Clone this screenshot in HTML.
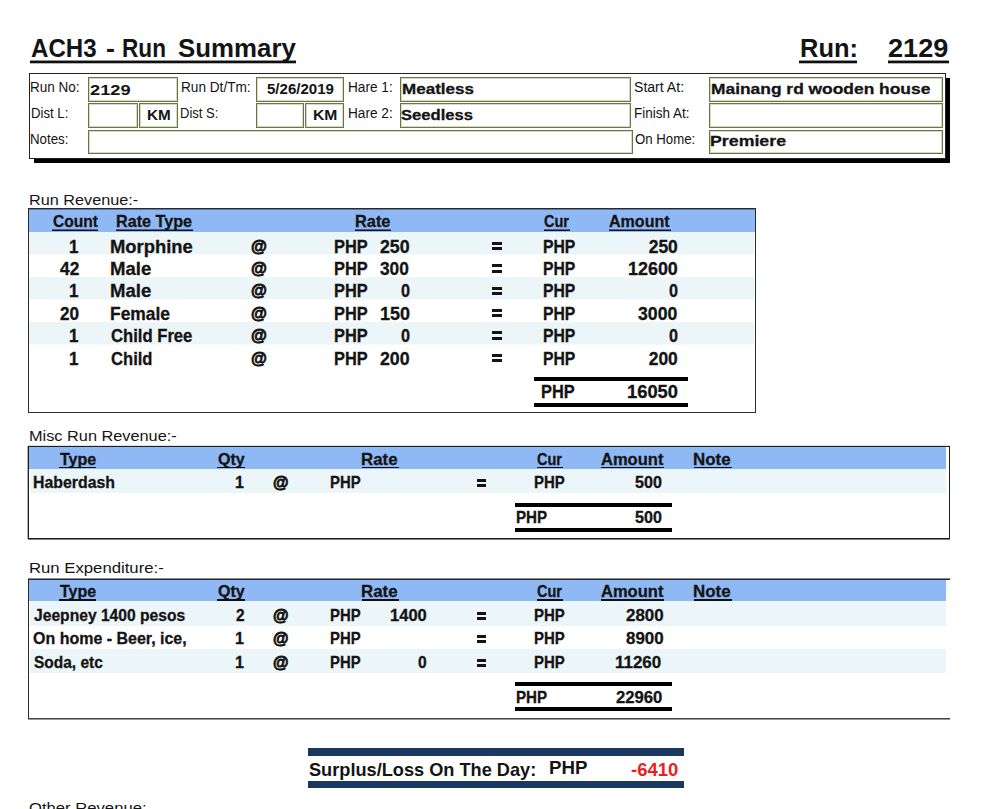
<!DOCTYPE html>
<html><head><meta charset="utf-8"><title>ACH3 - Run Summary</title>
<style>
html,body{margin:0;padding:0;background:#fff;}
body{width:997px;height:809px;position:relative;overflow:hidden;font-family:"Liberation Sans",sans-serif;}
.r{position:absolute;}
.k{-webkit-text-stroke:0.3px #141414;}
.t{position:absolute;white-space:pre;line-height:1;font-weight:700;color:#141414;transform-origin:0 0;font-family:"Liberation Sans",sans-serif;}
</style></head><body>
<span id="t0" class="t" style="left:30.96px;top:36.15px;font-size:25.58px;transform:scaleX(0.9415);">ACH3</span>
<span id="t1" class="t" style="left:105.78px;top:36.15px;font-size:25.58px;transform:scaleX(1.0516);">-</span>
<span id="t2" class="t" style="left:122.48px;top:36.15px;font-size:25.58px;transform:scaleX(0.8839);">Run</span>
<span id="t3" class="t" style="left:177.52px;top:36.15px;font-size:25.58px;transform:scaleX(1.0108);">Summary</span>
<div class="r" style="left:30px;top:60px;width:266px;height:1px;background:rgba(15,15,15,0.45);"></div>
<div class="r" style="left:30px;top:61px;width:266px;height:2px;background:#101010;"></div>
<div class="r" style="left:30px;top:63px;width:266px;height:1px;background:rgba(15,15,15,0.3);"></div>
<span id="t4" class="t" style="left:799.77px;top:36.00px;font-size:25.87px;transform:scaleX(0.9845);">Run:</span>
<div class="r" style="left:799px;top:60px;width:57.5px;height:1px;background:rgba(15,15,15,0.45);"></div>
<div class="r" style="left:799px;top:61px;width:57.5px;height:2px;background:#101010;"></div>
<div class="r" style="left:799px;top:63px;width:57.5px;height:1px;background:rgba(15,15,15,0.3);"></div>
<span id="t5" class="t" style="left:888.48px;top:36.00px;font-size:25.87px;transform:scaleX(1.0495);">2129</span>
<div class="r" style="left:887.5px;top:60px;width:61.5px;height:1px;background:rgba(15,15,15,0.45);"></div>
<div class="r" style="left:887.5px;top:61px;width:61.5px;height:2px;background:#101010;"></div>
<div class="r" style="left:887.5px;top:63px;width:61.5px;height:1px;background:rgba(15,15,15,0.3);"></div>
<div class="r" style="left:34px;top:78px;width:916px;height:85px;background:#000;"></div>
<div class="r" style="left:29px;top:73px;width:917px;height:86px;background:#fff;border:1px solid #222;box-sizing:border-box;"></div>
<div class="r" style="left:88px;top:77px;width:90px;height:25px;background:#fff;border:1px solid #69773f;box-sizing:border-box;box-shadow:inset 0 0 0 1px rgba(105,119,63,0.28);"></div>
<div class="r" style="left:88px;top:103px;width:50px;height:25px;background:#fff;border:1px solid #69773f;box-sizing:border-box;box-shadow:inset 0 0 0 1px rgba(105,119,63,0.28);"></div>
<div class="r" style="left:139px;top:103px;width:39px;height:25px;background:#fff;border:1px solid #69773f;box-sizing:border-box;box-shadow:inset 0 0 0 1px rgba(105,119,63,0.28);"></div>
<div class="r" style="left:256px;top:77px;width:88px;height:25px;background:#fff;border:1px solid #69773f;box-sizing:border-box;box-shadow:inset 0 0 0 1px rgba(105,119,63,0.28);"></div>
<div class="r" style="left:256px;top:103px;width:48px;height:25px;background:#fff;border:1px solid #69773f;box-sizing:border-box;box-shadow:inset 0 0 0 1px rgba(105,119,63,0.28);"></div>
<div class="r" style="left:305px;top:103px;width:39px;height:25px;background:#fff;border:1px solid #69773f;box-sizing:border-box;box-shadow:inset 0 0 0 1px rgba(105,119,63,0.28);"></div>
<div class="r" style="left:400px;top:77px;width:231px;height:25px;background:#fff;border:1px solid #69773f;box-sizing:border-box;box-shadow:inset 0 0 0 1px rgba(105,119,63,0.28);"></div>
<div class="r" style="left:400px;top:103px;width:231px;height:25px;background:#fff;border:1px solid #69773f;box-sizing:border-box;box-shadow:inset 0 0 0 1px rgba(105,119,63,0.28);"></div>
<div class="r" style="left:88px;top:130px;width:545px;height:24px;background:#fff;border:1px solid #69773f;box-sizing:border-box;box-shadow:inset 0 0 0 1px rgba(105,119,63,0.28);"></div>
<div class="r" style="left:709px;top:77px;width:234px;height:25px;background:#fff;border:1px solid #69773f;box-sizing:border-box;box-shadow:inset 0 0 0 1px rgba(105,119,63,0.28);"></div>
<div class="r" style="left:709px;top:103px;width:234px;height:25px;background:#fff;border:1px solid #69773f;box-sizing:border-box;box-shadow:inset 0 0 0 1px rgba(105,119,63,0.28);"></div>
<div class="r" style="left:709px;top:130px;width:234px;height:24px;background:#fff;border:1px solid #69773f;box-sizing:border-box;box-shadow:inset 0 0 0 1px rgba(105,119,63,0.28);"></div>
<span id="t6" class="t" style="left:30.45px;top:79.52px;font-size:14.39px;transform:scaleX(0.9391);font-weight:400;">Run No:</span>
<span id="t7" class="t" style="left:30.51px;top:105.72px;font-size:14.39px;transform:scaleX(0.9156);font-weight:400;">Dist L:</span>
<span id="t8" class="t" style="left:30.45px;top:131.92px;font-size:14.39px;transform:scaleX(0.9248);font-weight:400;">Notes:</span>
<span id="t9" class="t" style="left:180.73px;top:79.52px;font-size:14.39px;transform:scaleX(0.9473);font-weight:400;">Run Dt/Tm:</span>
<span id="t10" class="t" style="left:179.53px;top:105.72px;font-size:14.39px;transform:scaleX(0.9045);font-weight:400;">Dist S:</span>
<span id="t11" class="t" style="left:347.84px;top:79.52px;font-size:14.39px;transform:scaleX(0.9490);font-weight:400;">Hare 1:</span>
<span id="t12" class="t" style="left:347.84px;top:105.72px;font-size:14.39px;transform:scaleX(0.9490);font-weight:400;">Hare 2:</span>
<span id="t13" class="t" style="left:634.38px;top:79.52px;font-size:14.39px;transform:scaleX(0.9790);font-weight:400;">Start At:</span>
<span id="t14" class="t" style="left:634.45px;top:105.72px;font-size:14.39px;transform:scaleX(0.9379);font-weight:400;">Finish At:</span>
<span id="t15" class="t" style="left:634.97px;top:131.92px;font-size:14.39px;transform:scaleX(0.9198);font-weight:400;">On Home:</span>
<span id="t16" class="t" style="left:89.73px;top:81.76px;font-size:15.41px;transform:scaleX(1.1819);">2129</span>
<span id="t17" class="t" style="left:146.88px;top:107.03px;font-size:15.55px;transform:scaleX(0.9814);">KM</span>
<span id="t18" class="t" style="left:312.56px;top:107.03px;font-size:15.55px;transform:scaleX(1.0099);">KM</span>
<span id="t19" class="t" style="left:266.77px;top:81.28px;font-size:15.26px;transform:scaleX(0.9874);">5/26/2019</span>
<span id="t20" class="t k" style="left:402.17px;top:81.30px;font-size:15.48px;transform:scaleX(1.1013);">Meatless</span>
<span id="t21" class="t k" style="left:401.40px;top:107.30px;font-size:15.48px;transform:scaleX(1.0737);">Seedless</span>
<span id="t22" class="t k" style="left:710.54px;top:81.30px;font-size:15.48px;transform:scaleX(1.1243);">Mainang rd wooden house</span>
<span id="t23" class="t k" style="left:710.46px;top:133.30px;font-size:15.48px;transform:scaleX(1.1479);">Premiere</span>
<span id="t24" class="t" style="left:29.12px;top:192.13px;font-size:15.55px;transform:scaleX(1.0437);font-weight:400;">Run Revenue:-</span>
<div class="r" style="left:28px;top:208px;width:728px;height:205px;background:#fff;border:1px solid #2a2a2a;box-sizing:border-box;"></div>
<div class="r" style="left:29px;top:209px;width:726px;height:23px;background:#8fb9f4;"></div>
<div class="r" style="left:29px;top:209px;width:726px;height:1px;background:rgba(40,40,50,0.45);"></div>
<div class="r" style="left:29px;top:232px;width:725px;height:22px;background:#ecf5f8;"></div>
<div class="r" style="left:29px;top:254px;width:725px;height:1px;background:rgba(236,245,248,0.5);"></div>
<div class="r" style="left:29px;top:277px;width:725px;height:22px;background:#ecf5f8;"></div>
<div class="r" style="left:29px;top:299px;width:725px;height:1px;background:rgba(236,245,248,0.5);"></div>
<div class="r" style="left:29px;top:322px;width:725px;height:22px;background:#ecf5f8;"></div>
<div class="r" style="left:29px;top:344px;width:725px;height:1px;background:rgba(236,245,248,0.5);"></div>
<span id="t25" class="t k" style="left:52.76px;top:213.32px;font-size:16.28px;transform:scaleX(0.9584);">Count</span>
<div class="r" style="left:52px;top:229px;width:46px;height:1px;background:rgba(20,20,30,0.55);"></div>
<div class="r" style="left:52px;top:230px;width:46px;height:1px;background:#14141c;"></div>
<span id="t26" class="t k" style="left:116.12px;top:213.32px;font-size:16.28px;transform:scaleX(0.9944);">Rate Type</span>
<div class="r" style="left:116px;top:229px;width:77px;height:1px;background:rgba(20,20,30,0.55);"></div>
<div class="r" style="left:116px;top:230px;width:77px;height:1px;background:#14141c;"></div>
<span id="t27" class="t k" style="left:354.59px;top:213.32px;font-size:16.28px;transform:scaleX(1.0050);">Rate</span>
<div class="r" style="left:355px;top:229px;width:36px;height:1px;background:rgba(20,20,30,0.55);"></div>
<div class="r" style="left:355px;top:230px;width:36px;height:1px;background:#14141c;"></div>
<span id="t28" class="t k" style="left:544.41px;top:213.32px;font-size:16.28px;transform:scaleX(0.8932);">Cur</span>
<div class="r" style="left:544px;top:229px;width:26px;height:1px;background:rgba(20,20,30,0.55);"></div>
<div class="r" style="left:544px;top:230px;width:26px;height:1px;background:#14141c;"></div>
<span id="t29" class="t k" style="left:609.34px;top:213.32px;font-size:16.28px;transform:scaleX(0.9869);">Amount</span>
<div class="r" style="left:609px;top:229px;width:62px;height:1px;background:rgba(20,20,30,0.55);"></div>
<div class="r" style="left:609px;top:230px;width:62px;height:1px;background:#14141c;"></div>
<span id="t30" class="t k" style="left:68.97px;top:238.55px;font-size:17.44px;transform:scaleX(0.9757);">1</span>
<span id="t31" class="t k" style="left:110.28px;top:239.08px;font-size:17.73px;transform:scaleX(1.0382);">Morphine</span>
<span id="t32" class="t" style="left:251.35px;top:238.06px;font-size:17.13px;transform:scaleX(0.9495);-webkit-text-stroke:0.9px #141414;">@</span>
<span id="t33" class="t k" style="left:334.29px;top:239.08px;font-size:17.73px;transform:scaleX(0.9239);">PHP</span>
<span id="t34" class="t k" style="left:380.14px;top:238.55px;font-size:17.44px;transform:scaleX(1.0181);">250</span>
<div class="r" style="left:491.8px;top:241.9px;width:9.8px;height:2.9px;background:#141414;"></div>
<div class="r" style="left:491.8px;top:247.2px;width:9.8px;height:3.0px;background:#141414;"></div>
<span id="t35" class="t k" style="left:543.49px;top:239.08px;font-size:17.73px;transform:scaleX(0.8865);">PHP</span>
<span id="t36" class="t k" style="left:648.73px;top:238.55px;font-size:17.44px;">250</span>
<span id="t37" class="t k" style="left:59.99px;top:260.95px;font-size:17.44px;transform:scaleX(0.9936);">42</span>
<span id="t38" class="t k" style="left:110.25px;top:260.71px;font-size:17.73px;transform:scaleX(1.0469);">Male</span>
<span id="t39" class="t" style="left:251.35px;top:260.46px;font-size:17.13px;transform:scaleX(0.9495);-webkit-text-stroke:0.9px #141414;">@</span>
<span id="t40" class="t k" style="left:334.29px;top:260.71px;font-size:17.73px;transform:scaleX(0.9239);">PHP</span>
<span id="t41" class="t k" style="left:380.01px;top:260.95px;font-size:17.44px;transform:scaleX(0.9921);">300</span>
<div class="r" style="left:491.8px;top:264.2px;width:9.8px;height:2.9px;background:#141414;"></div>
<div class="r" style="left:491.8px;top:269.6px;width:9.8px;height:3.0px;background:#141414;"></div>
<span id="t42" class="t k" style="left:543.49px;top:260.71px;font-size:17.73px;transform:scaleX(0.8865);">PHP</span>
<span id="t43" class="t k" style="left:627.72px;top:260.95px;font-size:17.44px;transform:scaleX(1.0279);">12600</span>
<span id="t44" class="t k" style="left:68.97px;top:282.59px;font-size:17.44px;transform:scaleX(0.9757);">1</span>
<span id="t45" class="t k" style="left:110.25px;top:283.11px;font-size:17.73px;transform:scaleX(1.0469);">Male</span>
<span id="t46" class="t" style="left:251.35px;top:281.86px;font-size:17.13px;transform:scaleX(0.9495);-webkit-text-stroke:0.9px #141414;">@</span>
<span id="t47" class="t k" style="left:334.29px;top:283.11px;font-size:17.73px;transform:scaleX(0.9239);">PHP</span>
<span id="t48" class="t k" style="left:400.69px;top:282.59px;font-size:17.44px;transform:scaleX(0.9295);">0</span>
<div class="r" style="left:491.8px;top:286.7px;width:9.8px;height:2.9px;background:#141414;"></div>
<div class="r" style="left:491.8px;top:292.1px;width:9.8px;height:3.0px;background:#141414;"></div>
<span id="t49" class="t k" style="left:543.49px;top:283.11px;font-size:17.73px;transform:scaleX(0.8865);">PHP</span>
<span id="t50" class="t k" style="left:668.59px;top:282.59px;font-size:17.44px;transform:scaleX(0.9295);">0</span>
<span id="t51" class="t k" style="left:60.48px;top:305.75px;font-size:17.44px;transform:scaleX(0.9838);">20</span>
<span id="t52" class="t k" style="left:110.29px;top:305.51px;font-size:17.73px;transform:scaleX(0.9830);">Female</span>
<span id="t53" class="t" style="left:251.35px;top:305.26px;font-size:17.13px;transform:scaleX(0.9495);-webkit-text-stroke:0.9px #141414;">@</span>
<span id="t54" class="t k" style="left:334.29px;top:305.51px;font-size:17.73px;transform:scaleX(0.9239);">PHP</span>
<span id="t55" class="t k" style="left:379.51px;top:305.75px;font-size:17.44px;transform:scaleX(1.0318);">150</span>
<div class="r" style="left:491.8px;top:309.1px;width:9.8px;height:2.9px;background:#141414;"></div>
<div class="r" style="left:491.8px;top:314.4px;width:9.8px;height:3.0px;background:#141414;"></div>
<span id="t56" class="t k" style="left:543.49px;top:305.51px;font-size:17.73px;transform:scaleX(0.8865);">PHP</span>
<span id="t57" class="t k" style="left:638.45px;top:305.75px;font-size:17.44px;transform:scaleX(1.0124);">3000</span>
<span id="t58" class="t k" style="left:68.97px;top:328.15px;font-size:17.44px;transform:scaleX(0.9757);">1</span>
<span id="t59" class="t k" style="left:110.73px;top:327.91px;font-size:17.73px;transform:scaleX(0.9392);">Child Free</span>
<span id="t60" class="t" style="left:251.35px;top:326.66px;font-size:17.13px;transform:scaleX(0.9495);-webkit-text-stroke:0.9px #141414;">@</span>
<span id="t61" class="t k" style="left:334.29px;top:327.91px;font-size:17.73px;transform:scaleX(0.9239);">PHP</span>
<span id="t62" class="t k" style="left:400.69px;top:328.15px;font-size:17.44px;transform:scaleX(0.9295);">0</span>
<div class="r" style="left:491.8px;top:331.4px;width:9.8px;height:2.9px;background:#141414;"></div>
<div class="r" style="left:491.8px;top:336.8px;width:9.8px;height:3.0px;background:#141414;"></div>
<span id="t63" class="t k" style="left:543.49px;top:327.91px;font-size:17.73px;transform:scaleX(0.8865);">PHP</span>
<span id="t64" class="t k" style="left:668.59px;top:328.15px;font-size:17.44px;transform:scaleX(0.9295);">0</span>
<span id="t65" class="t k" style="left:68.97px;top:350.55px;font-size:17.44px;transform:scaleX(0.9757);">1</span>
<span id="t66" class="t k" style="left:110.73px;top:351.08px;font-size:17.73px;transform:scaleX(0.9368);">Child</span>
<span id="t67" class="t" style="left:251.35px;top:350.06px;font-size:17.13px;transform:scaleX(0.9495);-webkit-text-stroke:0.9px #141414;">@</span>
<span id="t68" class="t k" style="left:334.29px;top:351.08px;font-size:17.73px;transform:scaleX(0.9239);">PHP</span>
<span id="t69" class="t k" style="left:380.14px;top:350.55px;font-size:17.44px;transform:scaleX(1.0181);">200</span>
<div class="r" style="left:491.8px;top:353.9px;width:9.8px;height:2.9px;background:#141414;"></div>
<div class="r" style="left:491.8px;top:359.2px;width:9.8px;height:3.0px;background:#141414;"></div>
<span id="t70" class="t k" style="left:543.49px;top:351.08px;font-size:17.73px;transform:scaleX(0.8865);">PHP</span>
<span id="t71" class="t k" style="left:648.73px;top:350.55px;font-size:17.44px;">200</span>
<div class="r" style="left:534px;top:377px;width:154px;height:4px;background:#000;"></div>
<div class="r" style="left:534px;top:403px;width:154px;height:4px;background:#000;"></div>
<span id="t72" class="t k" style="left:541.02px;top:384.06px;font-size:17.73px;transform:scaleX(0.9241);">PHP</span>
<span id="t73" class="t k" style="left:626.69px;top:383.54px;font-size:17.44px;transform:scaleX(1.0507);">16050</span>
<span id="t74" class="t" style="left:29.31px;top:428.23px;font-size:15.55px;transform:scaleX(1.0488);font-weight:400;">Misc Run Revenue:-</span>
<div class="r" style="left:28px;top:446px;width:922px;height:93px;background:#fff;border:1px solid #1e1e1e;box-sizing:border-box;box-shadow:-1px 0 0 rgba(0,0,0,0.3),0 1px 0 rgba(0,0,0,0.5),0 -1px 0 rgba(0,0,0,0.12);"></div>
<div class="r" style="left:29px;top:447px;width:917px;height:22px;background:#8fb9f4;"></div>
<div class="r" style="left:30px;top:469px;width:916px;height:24px;background:#ecf5f8;"></div>
<span id="t75" class="t k" style="left:59.83px;top:451.02px;font-size:16.28px;transform:scaleX(0.9850);">Type</span>
<div class="r" style="left:58.8px;top:467px;width:37.6px;height:1.3px;background:#111;"></div>
<span id="t76" class="t k" style="left:218.04px;top:451.02px;font-size:16.28px;transform:scaleX(0.9850);">Qty</span>
<div class="r" style="left:217.4px;top:467px;width:28.0px;height:1.3px;background:#111;"></div>
<span id="t77" class="t k" style="left:361.46px;top:451.02px;font-size:16.28px;transform:scaleX(1.0356);">Rate</span>
<div class="r" style="left:362.3px;top:467px;width:36.4px;height:1.3px;background:#111;"></div>
<span id="t78" class="t k" style="left:537.40px;top:451.02px;font-size:16.28px;transform:scaleX(0.8924);">Cur</span>
<div class="r" style="left:536.5px;top:467px;width:26.5px;height:1.3px;background:#111;"></div>
<span id="t79" class="t k" style="left:600.82px;top:451.02px;font-size:16.28px;transform:scaleX(1.0157);">Amount</span>
<div class="r" style="left:600.6px;top:467px;width:63.9px;height:1.3px;background:#111;"></div>
<span id="t80" class="t k" style="left:693.24px;top:451.02px;font-size:16.28px;transform:scaleX(1.0388);">Note</span>
<div class="r" style="left:693.9px;top:467px;width:37.8px;height:1.3px;background:#111;"></div>
<span id="t81" class="t k" style="left:33.34px;top:474.06px;font-size:16.28px;transform:scaleX(0.9752);">Haberdash</span>
<span id="t82" class="t k" style="left:235.00px;top:474.77px;font-size:15.99px;transform:scaleX(1.0087);">1</span>
<span id="t83" class="t" style="left:273.20px;top:474.14px;font-size:16.21px;transform:scaleX(0.9793);-webkit-text-stroke:0.9px #141414;">@</span>
<span id="t84" class="t k" style="left:330.13px;top:474.06px;font-size:16.28px;transform:scaleX(0.9141);">PHP</span>
<div class="r" style="left:476.7px;top:479.2px;width:9.6px;height:2.9px;background:#141414;"></div>
<div class="r" style="left:476.7px;top:484.2px;width:9.6px;height:2.9px;background:#141414;"></div>
<span id="t85" class="t k" style="left:534.01px;top:474.06px;font-size:16.28px;transform:scaleX(0.9189);">PHP</span>
<span id="t86" class="t k" style="left:634.81px;top:474.77px;font-size:15.99px;transform:scaleX(1.0070);">500</span>
<div class="r" style="left:515px;top:503px;width:156.5px;height:4px;background:#000;"></div>
<div class="r" style="left:515px;top:528px;width:156.5px;height:4px;background:#000;"></div>
<span id="t87" class="t k" style="left:516.48px;top:509.32px;font-size:16.28px;transform:scaleX(0.9298);">PHP</span>
<span id="t88" class="t k" style="left:634.81px;top:509.57px;font-size:15.99px;transform:scaleX(1.0070);">500</span>
<span id="t89" class="t" style="left:29.28px;top:560.43px;font-size:15.55px;transform:scaleX(1.0753);font-weight:400;">Run Expenditure:-</span>
<div class="r" style="left:28px;top:578px;width:922px;height:1px;background:rgba(60,60,60,0.6);"></div>
<div class="r" style="left:28px;top:579px;width:922px;height:1px;background:#2a2a2a;"></div>
<div class="r" style="left:28px;top:579px;width:1px;height:140px;background:#2a2a2a;"></div>
<div class="r" style="left:28px;top:718px;width:922px;height:1px;background:#444;"></div>
<div class="r" style="left:28px;top:719px;width:922px;height:1px;background:#999;"></div>
<div class="r" style="left:29px;top:580px;width:917px;height:21px;background:#8fb9f4;"></div>
<div class="r" style="left:30px;top:601px;width:916px;height:25px;background:#ecf5f8;"></div>
<div class="r" style="left:30px;top:649px;width:916px;height:24px;background:#ecf5f8;"></div>
<span id="t90" class="t k" style="left:59.83px;top:583.16px;font-size:16.28px;transform:scaleX(0.9850);">Type</span>
<div class="r" style="left:58.8px;top:599.4px;width:37.6px;height:1.3px;background:#111;"></div>
<span id="t91" class="t k" style="left:218.04px;top:583.16px;font-size:16.28px;transform:scaleX(0.9850);">Qty</span>
<div class="r" style="left:217.4px;top:599.4px;width:28.0px;height:1.3px;background:#111;"></div>
<span id="t92" class="t k" style="left:361.46px;top:583.16px;font-size:16.28px;transform:scaleX(1.0356);">Rate</span>
<div class="r" style="left:362.3px;top:599.4px;width:36.4px;height:1.3px;background:#111;"></div>
<span id="t93" class="t k" style="left:537.40px;top:583.16px;font-size:16.28px;transform:scaleX(0.8924);">Cur</span>
<div class="r" style="left:536.5px;top:599.4px;width:26.5px;height:1.3px;background:#111;"></div>
<span id="t94" class="t k" style="left:600.82px;top:583.16px;font-size:16.28px;transform:scaleX(1.0157);">Amount</span>
<div class="r" style="left:600.6px;top:599.4px;width:63.9px;height:1.3px;background:#111;"></div>
<span id="t95" class="t k" style="left:693.24px;top:583.16px;font-size:16.28px;transform:scaleX(1.0388);">Note</span>
<div class="r" style="left:693.9px;top:599.4px;width:37.8px;height:1.3px;background:#111;"></div>
<span id="t96" class="t k" style="left:33.86px;top:607.22px;font-size:16.28px;transform:scaleX(0.9611);">Jeepney 1400 pesos</span>
<span id="t97" class="t k" style="left:236.22px;top:608.23px;font-size:15.99px;transform:scaleX(0.9637);">2</span>
<span id="t98" class="t" style="left:273.20px;top:606.84px;font-size:16.21px;transform:scaleX(0.9793);-webkit-text-stroke:0.9px #141414;">@</span>
<span id="t99" class="t k" style="left:330.13px;top:607.22px;font-size:16.28px;transform:scaleX(0.9141);">PHP</span>
<span id="t100" class="t k" style="left:389.87px;top:608.23px;font-size:15.99px;transform:scaleX(1.0343);">1400</span>
<div class="r" style="left:476.7px;top:611.9px;width:9.6px;height:2.9px;background:#141414;"></div>
<div class="r" style="left:476.7px;top:616.9px;width:9.6px;height:2.9px;background:#141414;"></div>
<span id="t101" class="t k" style="left:534.01px;top:607.22px;font-size:16.28px;transform:scaleX(0.9189);">PHP</span>
<span id="t102" class="t k" style="left:625.71px;top:608.23px;font-size:15.99px;transform:scaleX(1.0586);">2800</span>
<span id="t103" class="t k" style="left:33.46px;top:630.26px;font-size:16.28px;transform:scaleX(0.9827);">On home - Beer, ice,</span>
<span id="t104" class="t k" style="left:235.00px;top:630.97px;font-size:15.99px;transform:scaleX(1.0087);">1</span>
<span id="t105" class="t" style="left:273.20px;top:630.34px;font-size:16.21px;transform:scaleX(0.9793);-webkit-text-stroke:0.9px #141414;">@</span>
<span id="t106" class="t k" style="left:330.13px;top:630.26px;font-size:16.28px;transform:scaleX(0.9141);">PHP</span>
<div class="r" style="left:476.7px;top:635.4px;width:9.6px;height:2.9px;background:#141414;"></div>
<div class="r" style="left:476.7px;top:640.4px;width:9.6px;height:2.9px;background:#141414;"></div>
<span id="t107" class="t k" style="left:534.01px;top:630.26px;font-size:16.28px;transform:scaleX(0.9189);">PHP</span>
<span id="t108" class="t k" style="left:625.71px;top:630.97px;font-size:15.99px;transform:scaleX(1.0586);">8900</span>
<span id="t109" class="t k" style="left:33.64px;top:654.16px;font-size:16.28px;transform:scaleX(0.9516);">Soda, etc</span>
<span id="t110" class="t k" style="left:235.00px;top:654.87px;font-size:15.99px;transform:scaleX(1.0087);">1</span>
<span id="t111" class="t" style="left:273.20px;top:654.24px;font-size:16.21px;transform:scaleX(0.9793);-webkit-text-stroke:0.9px #141414;">@</span>
<span id="t112" class="t k" style="left:330.13px;top:654.16px;font-size:16.28px;transform:scaleX(0.9141);">PHP</span>
<span id="t113" class="t k" style="left:417.62px;top:654.87px;font-size:15.99px;transform:scaleX(0.9752);">0</span>
<div class="r" style="left:476.7px;top:659.3px;width:9.6px;height:2.9px;background:#141414;"></div>
<div class="r" style="left:476.7px;top:664.3px;width:9.6px;height:2.9px;background:#141414;"></div>
<span id="t114" class="t k" style="left:534.01px;top:654.16px;font-size:16.28px;transform:scaleX(0.9189);">PHP</span>
<span id="t115" class="t k" style="left:615.43px;top:654.87px;font-size:15.99px;transform:scaleX(1.0602);">11260</span>
<div class="r" style="left:515px;top:682px;width:156.5px;height:4px;background:#000;"></div>
<div class="r" style="left:515px;top:707px;width:156.5px;height:4px;background:#000;"></div>
<span id="t116" class="t k" style="left:516.48px;top:689.32px;font-size:16.28px;transform:scaleX(0.9298);">PHP</span>
<span id="t117" class="t k" style="left:615.61px;top:689.57px;font-size:15.99px;transform:scaleX(1.0436);">22960</span>
<div class="r" style="left:307.6px;top:748px;width:376.4px;height:7.6px;background:#1a3860;"></div>
<div class="r" style="left:307.6px;top:780.6px;width:376.4px;height:7.6px;background:#1a3860;"></div>
<span id="t118" class="t" style="left:308.65px;top:760.75px;font-size:18.60px;transform:scaleX(0.9773);">Surplus/Loss On The Day:</span>
<span id="t119" class="t" style="left:549.34px;top:759.45px;font-size:18.60px;transform:scaleX(1.0065);">PHP</span>
<span id="t120" class="t" style="left:630.50px;top:760.51px;font-size:18.90px;transform:scaleX(0.9790);color:#ee1c25;">-6410</span>
<span id="t121" class="t" style="left:28.98px;top:799.63px;font-size:15.55px;transform:scaleX(1.0709);font-weight:400;">Other Revenue:</span>
</body></html>
